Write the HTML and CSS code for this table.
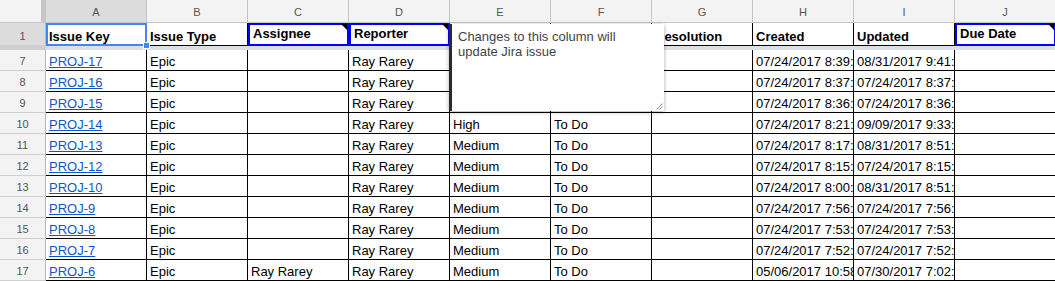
FILE: index.html
```html
<!DOCTYPE html>
<html>
<head>
<meta charset="utf-8">
<link rel="stylesheet" href="styles.css">
</head>
<body>
<div class="sheet">
  <div class="corner"></div>
  <div class="ch ch-sel">A</div><div class="ch">B</div><div class="ch">C</div><div class="ch">D</div><div class="ch">E</div><div class="ch">F</div><div class="ch">G</div><div class="ch">H</div><div class="ch">I</div><div class="ch">J</div>

  <div class="rh rh1 rh-sel">1</div>
  <div class="c h1 a1">Issue Key</div>
  <div class="c h1">Issue Type</div>
  <div class="c h1 note">Assignee</div>
  <div class="c h1 note">Reporter</div>
  <div class="c h1">Priority</div>
  <div class="c h1">Status</div>
  <div class="c h1">Resolution</div>
  <div class="c h1">Created</div>
  <div class="c h1">Updated</div>
  <div class="c h1 note">Due Date</div>

  <div class="fz-h"></div><div class="fz"></div>

  <div class="rh">7</div><div class="c"><a class="lk" href="#">PROJ-17</a></div><div class="c">Epic</div><div class="c"></div><div class="c">Ray Rarey</div><div class="c">Medium</div><div class="c">To Do</div><div class="c"></div><div class="c">07/24/2017 8:39:12</div><div class="c">08/31/2017 9:41:05</div><div class="c"></div>
  <div class="rh">8</div><div class="c"><a class="lk" href="#">PROJ-16</a></div><div class="c">Epic</div><div class="c"></div><div class="c">Ray Rarey</div><div class="c">Medium</div><div class="c">To Do</div><div class="c"></div><div class="c">07/24/2017 8:37:40</div><div class="c">07/24/2017 8:37:40</div><div class="c"></div>
  <div class="rh">9</div><div class="c"><a class="lk" href="#">PROJ-15</a></div><div class="c">Epic</div><div class="c"></div><div class="c">Ray Rarey</div><div class="c">Medium</div><div class="c">To Do</div><div class="c"></div><div class="c">07/24/2017 8:36:18</div><div class="c">07/24/2017 8:36:18</div><div class="c"></div>
  <div class="rh">10</div><div class="c"><a class="lk" href="#">PROJ-14</a></div><div class="c">Epic</div><div class="c"></div><div class="c">Ray Rarey</div><div class="c">High</div><div class="c">To Do</div><div class="c"></div><div class="c">07/24/2017 8:21:33</div><div class="c">09/09/2017 9:33:50</div><div class="c"></div>
  <div class="rh">11</div><div class="c"><a class="lk" href="#">PROJ-13</a></div><div class="c">Epic</div><div class="c"></div><div class="c">Ray Rarey</div><div class="c">Medium</div><div class="c">To Do</div><div class="c"></div><div class="c">07/24/2017 8:17:09</div><div class="c">08/31/2017 8:51:27</div><div class="c"></div>
  <div class="rh">12</div><div class="c"><a class="lk" href="#">PROJ-12</a></div><div class="c">Epic</div><div class="c"></div><div class="c">Ray Rarey</div><div class="c">Medium</div><div class="c">To Do</div><div class="c"></div><div class="c">07/24/2017 8:15:44</div><div class="c">07/24/2017 8:15:44</div><div class="c"></div>
  <div class="rh">13</div><div class="c"><a class="lk" href="#">PROJ-10</a></div><div class="c">Epic</div><div class="c"></div><div class="c">Ray Rarey</div><div class="c">Medium</div><div class="c">To Do</div><div class="c"></div><div class="c">07/24/2017 8:00:21</div><div class="c">08/31/2017 8:51:27</div><div class="c"></div>
  <div class="rh">14</div><div class="c"><a class="lk" href="#">PROJ-9</a></div><div class="c">Epic</div><div class="c"></div><div class="c">Ray Rarey</div><div class="c">Medium</div><div class="c">To Do</div><div class="c"></div><div class="c">07/24/2017 7:56:02</div><div class="c">07/24/2017 7:56:02</div><div class="c"></div>
  <div class="rh">15</div><div class="c"><a class="lk" href="#">PROJ-8</a></div><div class="c">Epic</div><div class="c"></div><div class="c">Ray Rarey</div><div class="c">Medium</div><div class="c">To Do</div><div class="c"></div><div class="c">07/24/2017 7:53:36</div><div class="c">07/24/2017 7:53:36</div><div class="c"></div>
  <div class="rh">16</div><div class="c"><a class="lk" href="#">PROJ-7</a></div><div class="c">Epic</div><div class="c"></div><div class="c">Ray Rarey</div><div class="c">Medium</div><div class="c">To Do</div><div class="c"></div><div class="c">07/24/2017 7:52:15</div><div class="c">07/24/2017 7:52:15</div><div class="c"></div>
  <div class="rh">17</div><div class="c"><a class="lk" href="#">PROJ-6</a></div><div class="c">Epic</div><div class="c">Ray Rarey</div><div class="c">Ray Rarey</div><div class="c">Medium</div><div class="c">To Do</div><div class="c"></div><div class="c">05/06/2017 10:58:41</div><div class="c">07/30/2017 7:02:19</div><div class="c"></div>

  <div class="comment">
    <p class="comment-text">Changes to this column will update Jira issue</p>
    <svg class="grip" width="9" height="9" viewBox="0 0 9 9"><path d="M8.5 2.5 L2.5 8.5 M8.5 5.5 L5.5 8.5" stroke="#8a8a8a" stroke-width="1" fill="none"/></svg>
  </div>
</div>
</body>
</html>
```
FILE: styles.css
```css
html, body {
  margin: 0;
  padding: 0;
  background: #fff;
}
body {
  width: 1055px;
  height: 281px;
  overflow: hidden;
  font-family: "Liberation Sans", Arial, sans-serif;
}
.sheet {
  position: relative;
  display: grid;
  grid-template-columns: 46px repeat(10, 101px);
  grid-template-rows: 23px 23px 4px repeat(11, 21px);
  width: 1056px;
}
.corner {
  background: #f3f3f3;
  border-right: 5px solid #c6c6c6;
  border-bottom: 1px solid #c6c6c6;
}
.ch {
  box-sizing: border-box;
  background: #f3f3f3;
  border-right: 1px solid #c6c6c6;
  border-bottom: 1px solid #c6c6c6;
  font-size: 11px;
  color: #555;
  text-align: center;
  line-height: 22px;
  padding-top: 1px;
  height: 23px;
}
.ch-sel, .rh-sel {
  background: #dcdcdc;
}
.rh {
  box-sizing: border-box;
  background: #f3f3f3;
  border-right: 1px solid #b8b8b8;
  border-bottom: 1px solid #cfcfcf;
  font-size: 11px;
  color: #555;
  text-align: center;
  line-height: 17px;
  padding-top: 3px;
}
.rh1 {
  padding-top: 5px;
}
.rh-sel {
  background: #dcdcdc;
}
.c {
  box-sizing: border-box;
  border-right: 1px solid #000;
  border-bottom: 1px solid #000;
  font-size: 13px;
  line-height: 17px;
  padding: 3px 3px 0;
  color: #000;
  white-space: nowrap;
  overflow: hidden;
}
.h1 {
  font-weight: bold;
  padding-top: 5px;
}
.a1 {
  position: relative;
  overflow: visible;
}
.a1::after {
  content: "";
  position: absolute;
  left: 0;
  top: 0;
  right: -1px;
  bottom: -1px;
  border: 2px solid #4285f4;
}
.a1::before {
  content: "";
  position: absolute;
  right: -4px;
  bottom: -4px;
  width: 5px;
  height: 5px;
  background: #4285f4;
  border: 1px solid #fff;
  z-index: 2;
}
.note {
  position: relative;
  overflow: visible;
  padding-top: 2px;
  padding-left: 5px;
}
.note::after {
  content: "";
  position: absolute;
  left: 0;
  top: 0;
  right: -1px;
  bottom: -1px;
  border: 2px solid #0000ff;
}
.note::before {
  content: "";
  position: absolute;
  top: 1px;
  right: 1px;
  width: 0;
  height: 0;
  border-top: 6px solid #000;
  border-left: 6px solid transparent;
  z-index: 2;
}
.fz-h {
  background: #cfcfcf;
}
.fz {
  grid-column: 2 / -1;
  background: #dadfe8;
}
.lk {
  color: #1155cc;
  text-decoration: underline;
}
.comment {
  position: absolute;
  left: 449px;
  top: 24px;
  width: 215px;
  height: 87px;
  box-sizing: border-box;
  background: #fff;
  border-left: 3px solid #2b2b2b;
  box-shadow: 0 1px 4px rgba(0, 0, 0, 0.35);
  z-index: 5;
}
.comment-text {
  margin: 0;
  padding: 5px 20px 0 6px;
  font-size: 13px;
  line-height: 15px;
  color: #444;
}
.grip {
  position: absolute;
  right: 1px;
  bottom: 1px;
}
```
